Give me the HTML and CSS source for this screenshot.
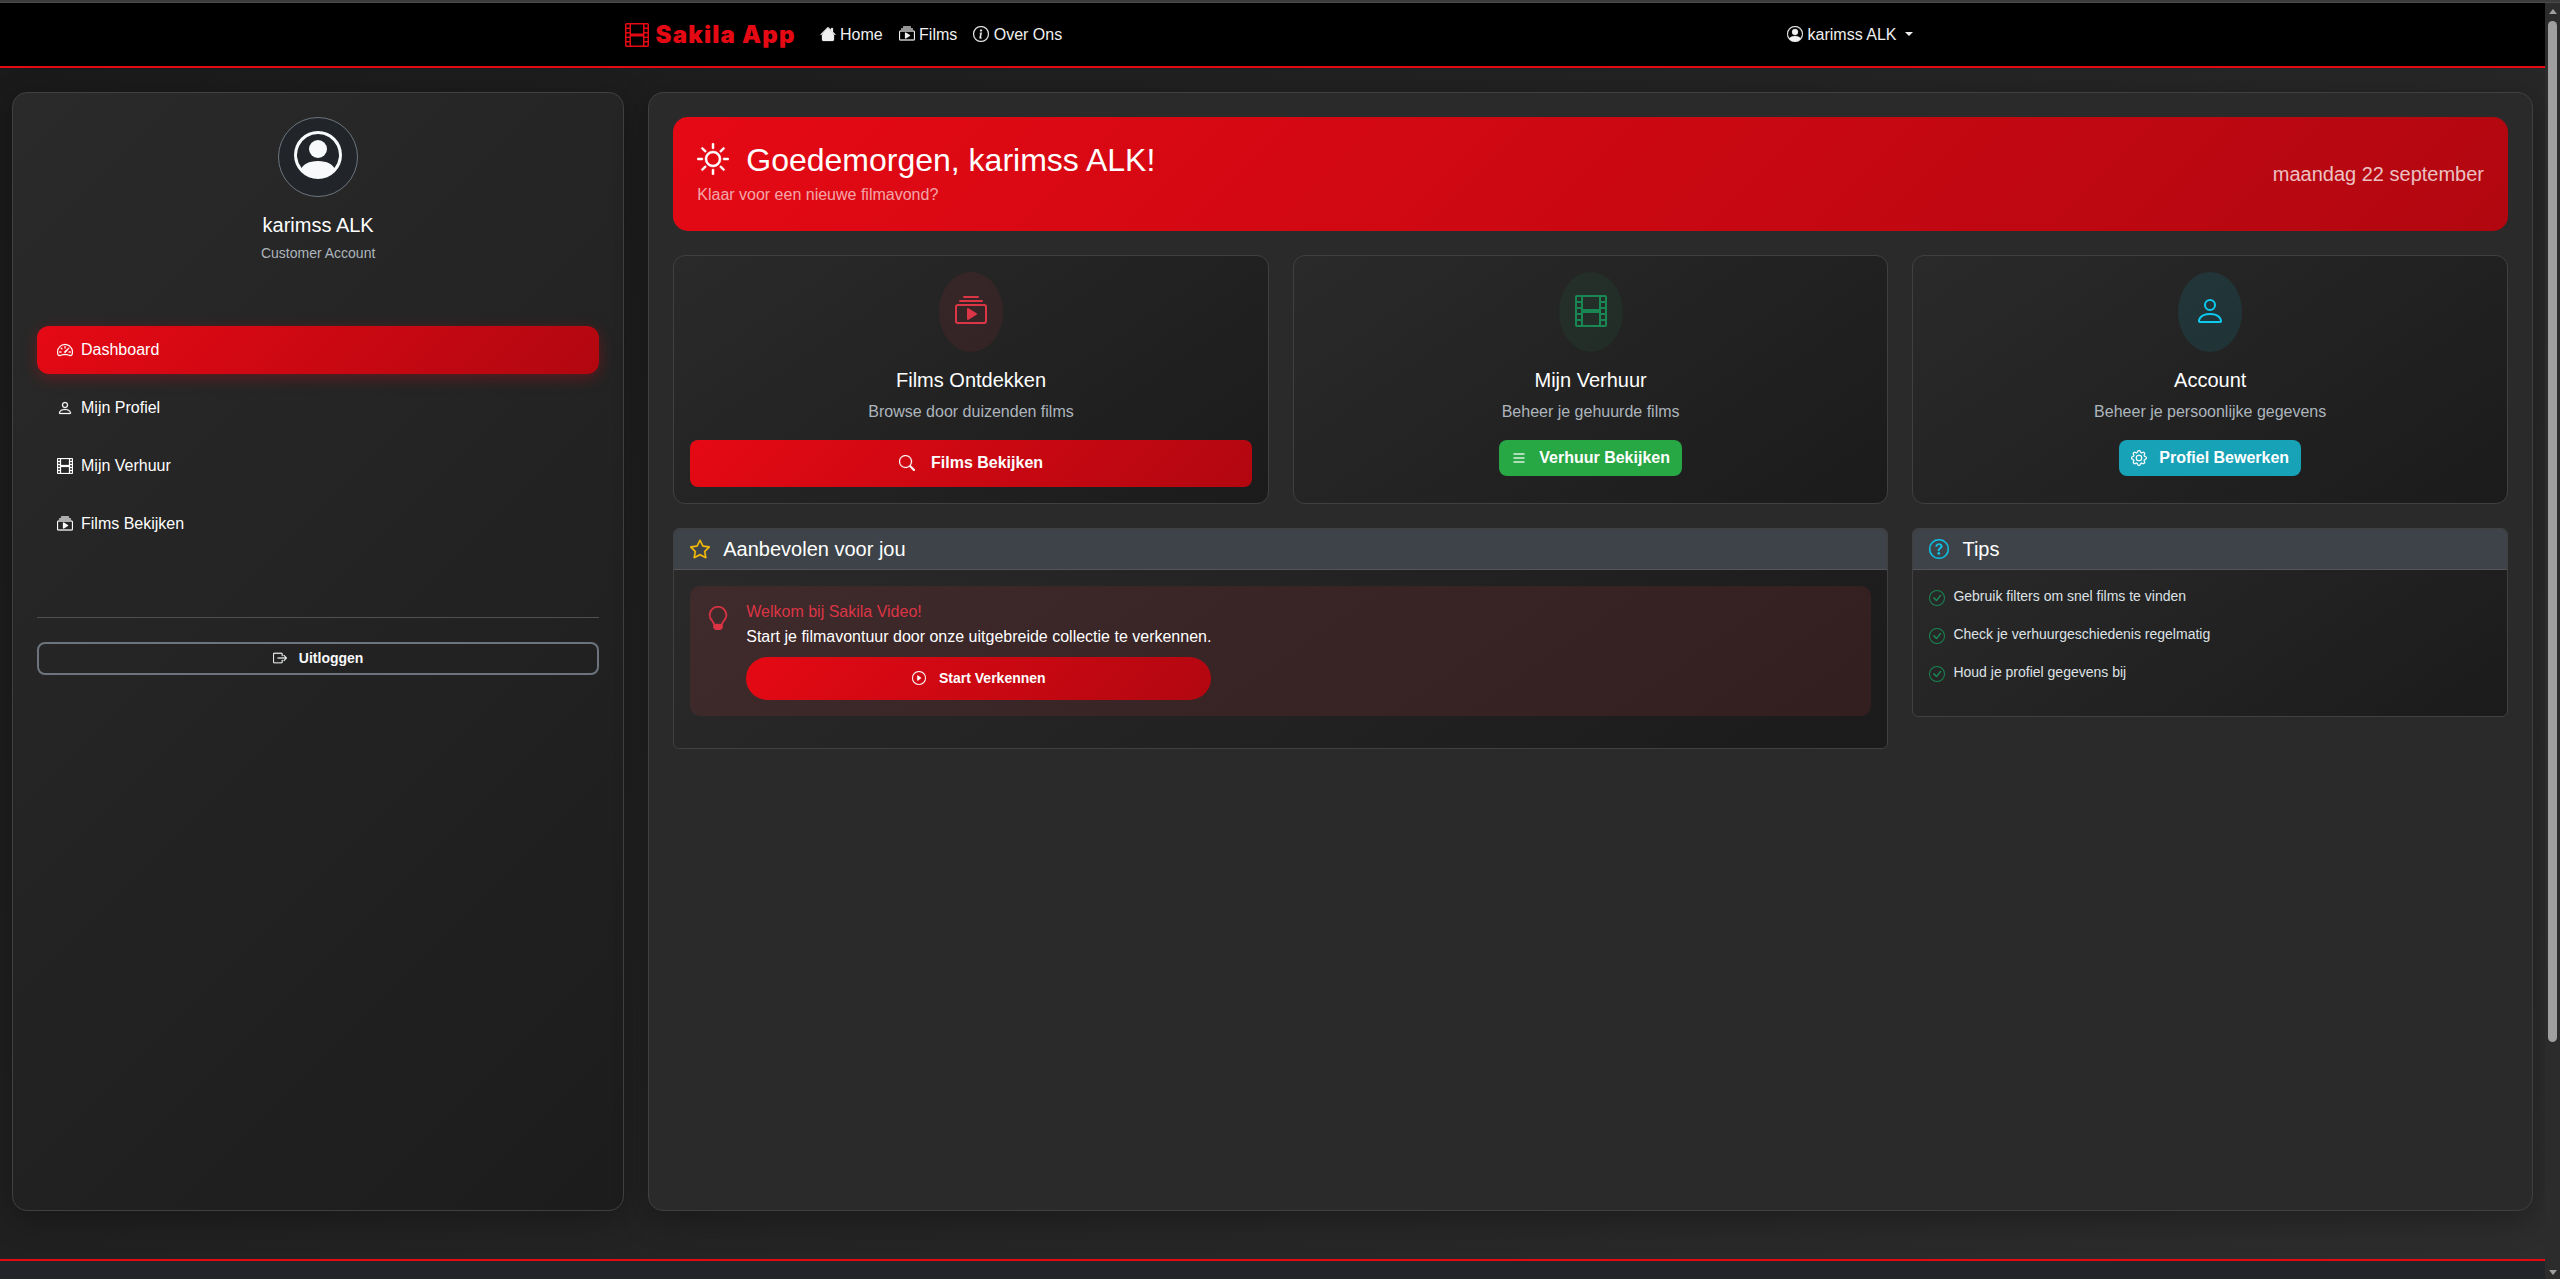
FILE: index.html
```html
<!DOCTYPE html>
<html lang="nl">
<head>
<meta charset="utf-8">
<title>Sakila App</title>
<link rel="stylesheet" href="styles.css">
</head>
<body>
<svg class="sprite" aria-hidden="true">
  <symbol id="film" viewBox="0 0 16 16"><path d="M0 1a1 1 0 0 1 1-1h14a1 1 0 0 1 1 1v14a1 1 0 0 1-1 1H1a1 1 0 0 1-1-1zm4 0v6h8V1zm8 8H4v6h8zM1 1v2h2V1zm2 3H1v2h2zM1 7v2h2V7zm2 3H1v2h2zm-2 3v2h2v-2zM15 1h-2v2h2zm-2 3v2h2V4zm2 3h-2v2h2zm-2 3v2h2v-2zm2 3h-2v2h2z"/></symbol>
  <symbol id="house" viewBox="0 0 16 16"><path d="M8.707 1.5a1 1 0 0 0-1.414 0L.646 8.146a.5.5 0 0 0 .708.708L8 2.207l6.646 6.647a.5.5 0 0 0 .708-.708L13 5.793V2.5a.5.5 0 0 0-.5-.5h-1a.5.5 0 0 0-.5.5v1.293z"/><path d="m8 3.293 6 6V13.5a1.5 1.5 0 0 1-1.5 1.5h-9A1.5 1.5 0 0 1 2 13.5V9.293z"/><path d="M8 2 1.5 8.5h13z"/></symbol>
  <symbol id="collection" viewBox="0 0 16 16"><path d="M2 3a.5.5 0 0 0 .5.5h11a.5.5 0 0 0 0-1h-11A.5.5 0 0 0 2 3m2-2a.5.5 0 0 0 .5.5h7a.5.5 0 0 0 0-1h-7A.5.5 0 0 0 4 1m2.765 5.576A.5.5 0 0 0 6 7v5a.5.5 0 0 0 .765.424l4-2.5a.5.5 0 0 0 0-.848z"/><path d="M1.5 14.5A1.5 1.5 0 0 1 0 13V6a1.5 1.5 0 0 1 1.5-1.5h13A1.5 1.5 0 0 1 16 6v7a1.5 1.5 0 0 1-1.5 1.5zm13-1a.5.5 0 0 0 .5-.5V6a.5.5 0 0 0-.5-.5h-13A.5.5 0 0 0 1 6v7a.5.5 0 0 0 .5.5z"/></symbol>
  <symbol id="info" viewBox="0 0 16 16"><path d="M8 15A7 7 0 1 1 8 1a7 7 0 0 1 0 14m0 1A8 8 0 1 0 8 0a8 8 0 0 0 0 16"/><path d="m8.93 6.588-2.29.287-.082.38.45.083c.294.07.352.176.288.469l-.738 3.468c-.194.897.105 1.319.808 1.319.545 0 1.178-.252 1.465-.598l.088-.416c-.2.176-.492.246-.686.246-.275 0-.375-.193-.304-.533zM9 4.5a1 1 0 1 1-2 0 1 1 0 0 1 2 0"/></symbol>
  <symbol id="person-circle" viewBox="0 0 16 16"><path d="M11 6a3 3 0 1 1-6 0 3 3 0 0 1 6 0"/><path fill-rule="evenodd" d="M0 8a8 8 0 1 1 16 0A8 8 0 0 1 0 8m8-7a7 7 0 0 0-5.468 11.37C3.242 11.226 4.805 10 8 10s4.757 1.225 5.468 2.37A7 7 0 0 0 8 1"/></symbol>
  <symbol id="speedometer" viewBox="0 0 16 16"><path d="M8 4a.5.5 0 0 1 .5.5V6a.5.5 0 0 1-1 0V4.5A.5.5 0 0 1 8 4M3.732 5.732a.5.5 0 0 1 .707 0l.915.914a.5.5 0 1 1-.708.708l-.914-.915a.5.5 0 0 1 0-.707M2 10a.5.5 0 0 1 .5-.5h1.586a.5.5 0 0 1 0 1H2.5A.5.5 0 0 1 2 10m9.5 0a.5.5 0 0 1 .5-.5h1.5a.5.5 0 0 1 0 1H12a.5.5 0 0 1-.5-.5m.754-4.246a.39.39 0 0 0-.527-.02L7.547 9.31a.91.91 0 1 0 1.302 1.258l3.434-4.297a.39.39 0 0 0-.029-.518z"/><path fill-rule="evenodd" d="M0 10a8 8 0 1 1 15.547 2.661c-.442 1.253-1.845 1.602-2.932 1.25C11.309 13.488 9.475 13 8 13c-1.474 0-3.31.488-4.615.911-1.087.352-2.49.003-2.932-1.25A8 8 0 0 1 0 10m8-7a7 7 0 0 0-6.603 9.329c.203.575.923.876 1.68.63C4.397 12.533 6.358 12 8 12s3.604.532 4.923.96c.757.245 1.477-.056 1.68-.631A7 7 0 0 0 8 3"/></symbol>
  <symbol id="person" viewBox="0 0 16 16"><path d="M8 8a3 3 0 1 0 0-6 3 3 0 0 0 0 6m2-3a2 2 0 1 1-4 0 2 2 0 0 1 4 0m4 8c0 1-1 1-1 1H3s-1 0-1-1 1-4 6-4 6 3 6 4m-1-.004c-.001-.246-.154-.986-.832-1.664C11.516 10.68 10.289 10 8 10s-3.516.68-4.168 1.332c-.678.678-.83 1.418-.832 1.664z"/></symbol>
  <symbol id="logout" viewBox="0 0 16 16"><path d="M10 12.5a.5.5 0 0 1-.5.5h-8a.5.5 0 0 1-.5-.5v-9a.5.5 0 0 1 .5-.5h8a.5.5 0 0 1 .5.5v2a.5.5 0 0 0 1 0v-2A1.5 1.5 0 0 0 9.5 2h-8A1.5 1.5 0 0 0 0 3.5v9A1.5 1.5 0 0 0 1.5 14h8a1.5 1.5 0 0 0 1.5-1.5v-2a.5.5 0 0 0-1 0z"/><path d="M15.854 8.354a.5.5 0 0 0 0-.708l-3-3a.5.5 0 0 0-.708.708L14.293 7.5H5.5a.5.5 0 0 0 0 1h8.793l-2.147 2.146a.5.5 0 0 0 .708.708z"/></symbol>
  <symbol id="sun" viewBox="0 0 16 16"><path d="M8 11a3 3 0 1 1 0-6 3 3 0 0 1 0 6m0 1a4 4 0 1 0 0-8 4 4 0 0 0 0 8M8 0a.5.5 0 0 1 .5.5v2a.5.5 0 0 1-1 0v-2A.5.5 0 0 1 8 0m0 13a.5.5 0 0 1 .5.5v2a.5.5 0 0 1-1 0v-2A.5.5 0 0 1 8 13m8-5a.5.5 0 0 1-.5.5h-2a.5.5 0 0 1 0-1h2a.5.5 0 0 1 .5.5M3 8a.5.5 0 0 1-.5.5h-2a.5.5 0 0 1 0-1h2A.5.5 0 0 1 3 8m10.657-5.657a.5.5 0 0 1 0 .707l-1.414 1.415a.5.5 0 1 1-.707-.708l1.414-1.414a.5.5 0 0 1 .707 0m-9.193 9.193a.5.5 0 0 1 0 .707L3.05 13.657a.5.5 0 0 1-.707-.707l1.414-1.414a.5.5 0 0 1 .707 0m9.193 2.121a.5.5 0 0 1-.707 0l-1.414-1.414a.5.5 0 0 1 .707-.707l1.414 1.414a.5.5 0 0 1 0 .707M4.464 4.465a.5.5 0 0 1-.707 0L2.343 3.05a.5.5 0 1 1 .707-.707l1.414 1.414a.5.5 0 0 1 0 .708"/></symbol>
  <symbol id="search" viewBox="0 0 16 16"><path d="M11.742 10.344a6.5 6.5 0 1 0-1.397 1.398h-.001q.044.06.098.115l3.85 3.85a1 1 0 0 0 1.415-1.414l-3.85-3.85a1 1 0 0 0-.115-.1zM12 6.5a5.5 5.5 0 1 1-11 0 5.5 5.5 0 0 1 11 0"/></symbol>
  <symbol id="list" viewBox="0 0 16 16"><path d="M2.5 12a.5.5 0 0 1 .5-.5h10a.5.5 0 0 1 0 1H3a.5.5 0 0 1-.5-.5m0-4a.5.5 0 0 1 .5-.5h10a.5.5 0 0 1 0 1H3a.5.5 0 0 1-.5-.5m0-4a.5.5 0 0 1 .5-.5h10a.5.5 0 0 1 0 1H3a.5.5 0 0 1-.5-.5"/></symbol>
  <symbol id="gear" viewBox="0 0 16 16"><path d="M8 4.754a3.246 3.246 0 1 0 0 6.492 3.246 3.246 0 0 0 0-6.492M5.754 8a2.246 2.246 0 1 1 4.492 0 2.246 2.246 0 0 1-4.492 0"/><path d="M9.796 1.343c-.527-1.79-3.065-1.79-3.592 0l-.094.319a.873.873 0 0 1-1.255.52l-.292-.16c-1.64-.892-3.433.902-2.54 2.541l.159.292a.873.873 0 0 1-.52 1.255l-.319.094c-1.79.527-1.79 3.065 0 3.592l.319.094a.873.873 0 0 1 .52 1.255l-.16.292c-.892 1.64.901 3.434 2.541 2.54l.292-.159a.873.873 0 0 1 1.255.52l.094.319c.527 1.79 3.065 1.79 3.592 0l.094-.319a.873.873 0 0 1 1.255-.52l.292.16c1.64.893 3.434-.902 2.54-2.541l-.159-.292a.873.873 0 0 1 .52-1.255l.319-.094c1.79-.527 1.79-3.065 0-3.592l-.319-.094a.873.873 0 0 1-.52-1.255l.16-.292c.893-1.64-.902-3.433-2.541-2.54l-.292.159a.873.873 0 0 1-1.255-.52zm-2.633.283c.246-.835 1.428-.835 1.674 0l.094.319a1.873 1.873 0 0 0 2.693 1.115l.291-.16c.764-.415 1.6.42 1.184 1.185l-.159.292a1.873 1.873 0 0 0 1.116 2.692l.318.094c.835.246.835 1.428 0 1.674l-.319.094a1.873 1.873 0 0 0-1.115 2.693l.16.291c.415.764-.42 1.6-1.185 1.184l-.291-.159a1.873 1.873 0 0 0-2.693 1.116l-.094.318c-.246.835-1.428.835-1.674 0l-.094-.319a1.873 1.873 0 0 0-2.692-1.115l-.292.16c-.764.415-1.6-.42-1.184-1.185l.159-.291A1.873 1.873 0 0 0 1.945 8.93l-.319-.094c-.835-.246-.835-1.428 0-1.674l.319-.094A1.873 1.873 0 0 0 3.06 4.377l-.16-.292c-.415-.764.42-1.6 1.185-1.184l.292.159a1.873 1.873 0 0 0 2.692-1.115z"/></symbol>
  <symbol id="star" viewBox="0 0 16 16"><path d="M2.866 14.85c-.078.444.36.791.746.593l4.39-2.256 4.389 2.256c.386.198.824-.149.746-.592l-.83-4.73 3.522-3.356c.33-.314.16-.888-.282-.95l-4.898-.696L8.465.792a.513.513 0 0 0-.927 0L5.354 5.12l-4.898.696c-.441.062-.612.636-.283.95l3.523 3.356-.83 4.73zm4.905-2.767-3.686 1.894.694-3.957a.56.56 0 0 0-.163-.505L1.71 6.745l4.052-.576a.53.53 0 0 0 .393-.288L8 2.223l1.847 3.658a.53.53 0 0 0 .393.288l4.052.575-2.906 2.77a.56.56 0 0 0-.163.506l.694 3.957-3.686-1.894a.5.5 0 0 0-.461 0z"/></symbol>
  <symbol id="bulb" viewBox="0 0 16 16"><path d="M2 6a6 6 0 1 1 10.174 4.31c-.203.196-.359.4-.453.619l-.762 1.769A.5.5 0 0 1 10.5 13a.5.5 0 0 1 0 1 .5.5 0 0 1 0 1l-.224.447a1 1 0 0 1-.894.553H6.618a1 1 0 0 1-.894-.553L5.5 15a.5.5 0 0 1 0-1 .5.5 0 0 1 0-1 .5.5 0 0 1-.46-.302l-.761-1.77a2 2 0 0 0-.453-.618A5.98 5.98 0 0 1 2 6m6-5a5 5 0 0 0-3.479 8.592c.263.254.514.564.676.941L5.83 12h4.342l.632-1.467c.162-.377.413-.687.676-.941A5 5 0 0 0 8 1"/><path d="M5 12.500h6v2H5z"/></symbol>
  <symbol id="play" viewBox="0 0 16 16"><path d="M8 15A7 7 0 1 1 8 1a7 7 0 0 1 0 14m0 1A8 8 0 1 0 8 0a8 8 0 0 0 0 16"/><path d="M6.271 5.055a.5.5 0 0 1 .52.038l3.5 2.5a.5.5 0 0 1 0 .814l-3.5 2.5A.5.5 0 0 1 6 10.5v-5a.5.5 0 0 1 .271-.445"/></symbol>
  <symbol id="question" viewBox="0 0 16 16"><path d="M8 15A7 7 0 1 1 8 1a7 7 0 0 1 0 14m0 1A8 8 0 1 0 8 0a8 8 0 0 0 0 16"/><path d="M5.255 5.786a.237.237 0 0 0 .241.247h.825c.138 0 .248-.113.266-.25.09-.656.54-1.134 1.342-1.134.686 0 1.314.343 1.314 1.168 0 .635-.374.927-.965 1.371-.673.489-1.206 1.06-1.168 1.987l.003.217a.25.25 0 0 0 .25.246h.811a.25.25 0 0 0 .25-.25v-.105c0-.718.273-.927 1.01-1.486.609-.463 1.244-.977 1.244-2.056 0-1.511-1.276-2.241-2.673-2.241-1.267 0-2.655.59-2.75 2.286m1.557 5.763c0 .533.425.927 1.01.927.609 0 1.028-.394 1.028-.927 0-.552-.42-.94-1.029-.94-.584 0-1.009.388-1.009.94"/></symbol>
  <symbol id="check" viewBox="0 0 16 16"><path d="M8 15A7 7 0 1 1 8 1a7 7 0 0 1 0 14m0 1A8 8 0 1 0 8 0a8 8 0 0 0 0 16"/><path d="m10.97 4.97-.02.022-3.473 4.425-2.093-2.094a.75.75 0 0 0-1.06 1.06L6.97 11.03a.75.75 0 0 0 1.079-.02l3.992-4.99a.75.75 0 0 0-1.071-1.05"/></symbol>
</svg>

<div class="window-edge"></div>
<div class="window">
  <div class="page">
    <header class="navbar">
      <div class="navbar-inner">
        <a class="brand"><svg class="icon"><use href="#film"/></svg><span>Sakila App</span></a>
        <nav class="main-nav">
          <a class="nav-item"><svg class="icon"><use href="#house"/></svg> Home</a>
          <a class="nav-item"><svg class="icon"><use href="#collection"/></svg> Films</a>
          <a class="nav-item"><svg class="icon"><use href="#info"/></svg> Over Ons</a>
        </nav>
        <a class="nav-item user-menu"><svg class="icon"><use href="#person-circle"/></svg> karimss ALK<span class="caret"></span></a>
      </div>
    </header>

    <div class="layout">
      <aside class="sidebar">
        <div class="avatar"><svg class="icon"><use href="#person-circle"/></svg></div>
        <h5 class="user-name">karimss ALK</h5>
        <small class="user-role">Customer Account</small>
        <nav class="side-nav">
          <a class="side-link active"><svg class="icon"><use href="#speedometer"/></svg>Dashboard</a>
          <a class="side-link"><svg class="icon"><use href="#person"/></svg>Mijn Profiel</a>
          <a class="side-link"><svg class="icon"><use href="#film"/></svg>Mijn Verhuur</a>
          <a class="side-link"><svg class="icon"><use href="#collection"/></svg>Films Bekijken</a>
        </nav>
        <hr class="divider">
        <button class="btn btn-logout"><svg class="icon"><use href="#logout"/></svg>Uitloggen</button>
      </aside>

      <main class="content">
        <section class="banner">
          <div>
            <h2 class="banner-title"><svg class="icon"><use href="#sun"/></svg>Goedemorgen, karimss ALK!</h2>
            <p class="banner-sub">Klaar voor een nieuwe filmavond?</p>
          </div>
          <div class="banner-date">maandag 22 september</div>
        </section>

        <section class="actions">
          <article class="card action">
            <div class="badge badge-red"><svg class="icon"><use href="#collection"/></svg></div>
            <h5 class="card-title">Films Ontdekken</h5>
            <p class="card-text">Browse door duizenden films</p>
            <button class="btn btn-red"><svg class="icon"><use href="#search"/></svg>Films Bekijken</button>
          </article>
          <article class="card action">
            <div class="badge badge-green"><svg class="icon"><use href="#film"/></svg></div>
            <h5 class="card-title">Mijn Verhuur</h5>
            <p class="card-text">Beheer je gehuurde films</p>
            <button class="btn btn-green"><svg class="icon"><use href="#list"/></svg>Verhuur Bekijken</button>
          </article>
          <article class="card action">
            <div class="badge badge-cyan"><svg class="icon"><use href="#person"/></svg></div>
            <h5 class="card-title">Account</h5>
            <p class="card-text">Beheer je persoonlijke gegevens</p>
            <button class="btn btn-cyan"><svg class="icon"><use href="#gear"/></svg>Profiel Bewerken</button>
          </article>
        </section>

        <section class="panels">
          <article class="card panel panel-wide">
            <h5 class="panel-head"><svg class="icon icon-yellow"><use href="#star"/></svg>Aanbevolen voor jou</h5>
            <div class="panel-body">
              <div class="welcome">
                <svg class="icon welcome-icon"><use href="#bulb"/></svg>
                <div class="welcome-copy">
                  <h6 class="welcome-title">Welkom bij Sakila Video!</h6>
                  <p class="welcome-text">Start je filmavontuur door onze uitgebreide collectie te verkennen.</p>
                  <button class="btn btn-red btn-pill"><svg class="icon"><use href="#play"/></svg>Start Verkennen</button>
                </div>
              </div>
            </div>
          </article>
          <article class="card panel">
            <h5 class="panel-head"><svg class="icon icon-cyan"><use href="#question"/></svg>Tips</h5>
            <ul class="panel-body tips">
              <li class="tip"><svg class="icon"><use href="#check"/></svg>Gebruik filters om snel films te vinden</li>
              <li class="tip"><svg class="icon"><use href="#check"/></svg>Check je verhuurgeschiedenis regelmatig</li>
              <li class="tip"><svg class="icon"><use href="#check"/></svg>Houd je profiel gegevens bij</li>
            </ul>
          </article>
        </section>
      </main>
    </div>

    <footer class="footer"></footer>
  </div>

  <div class="scrollbar">
    <span class="arrow arrow-up"></span>
    <span class="thumb"></span>
    <span class="arrow arrow-down"></span>
  </div>
</div>
</body>
</html>
```
FILE: styles.css
```css
* { box-sizing: border-box; }

body {
  margin: 0;
  height: 1279px;
  overflow: hidden;
  display: flex;
  flex-direction: column;
  background: #1a1a1a;
  color: #fff;
  font: 16px/24px "Liberation Sans", Arial, sans-serif;
}

h2, h5, h6, p, ul { margin: 0; padding: 0; font-weight: 400; }
h5 { font-size: 20px; line-height: 24px; }

.sprite { display: none; }
.icon {
  width: 1em;
  height: 1em;
  fill: currentColor;
  stroke: currentColor;
  stroke-width: .25px;
  overflow: visible;
  vertical-align: -.125em;
  flex: none;
}

.window-edge { height: 3px; flex: none; background: #3c3c3c; border-bottom: 1px solid #4a4a4a; }
.window { flex: 1; display: flex; min-height: 0; }
.page {
  flex: 1;
  display: flex;
  flex-direction: column;
  background: linear-gradient(135deg, #1a1a1a, #2d2d2d);
}

/* Top navigation */
.navbar { height: 65px; flex: none; background: #000; border-bottom: 2px solid #e50914; }
.navbar-inner {
  width: 1296px;
  height: 100%;
  margin: 0 auto;
  display: flex;
  align-items: center;
}
.brand {
  display: flex;
  align-items: center;
  gap: 7px;
  width: 187px;
  color: #e50914;
  font: 900 24px/36px Inter, "Liberation Sans", sans-serif;
  letter-spacing: 1.2px;
  white-space: nowrap;
}
.brand .icon, .avatar .icon, .badge .icon { stroke-width: 0; }
.main-nav { display: flex; }
.nav-item { padding: 0 8px; color: #f0f0f0; white-space: nowrap; }
.user-menu { margin-left: auto; }
.caret {
  display: inline-block;
  margin-left: 8px;
  vertical-align: 4px;
  border: 4px solid transparent;
  border-top-color: currentColor;
  border-bottom: 0;
}

/* Page columns */
.layout { flex: 1; display: flex; gap: 24px; padding: 24px 12px 48px; }
.sidebar, .content {
  border: 1px solid #404040;
  border-radius: 15px;
  padding: 24px;
  box-shadow: 0 8px 32px rgba(0, 0, 0, .3);
}
.sidebar {
  width: 612.25px;
  flex: none;
  display: flex;
  flex-direction: column;
  align-items: center;
  background: linear-gradient(135deg, #2a2a2a, #1c1c1c);
}
.content { flex: 1; background: #2a2a2a; }

/* Sidebar */
.avatar {
  width: 80px;
  height: 80px;
  padding-bottom: 4px;
  display: flex;
  align-items: center;
  justify-content: center;
  border: 1px solid #6c757d;
  border-radius: 50%;
  background: #212529;
  color: #f8f9fa;
  font-size: 48px;
}
.user-name { margin-top: 16px; }
.user-role { margin-top: 6px; font-size: 14px; line-height: 21px; color: #adb5bd; }
.side-nav { width: 100%; margin-top: 62px; display: grid; gap: 10px; }
.side-link {
  height: 48px;
  padding: 0 20px;
  display: flex;
  align-items: center;
  gap: 8px;
  border-radius: 12px;
}
.side-link.active {
  background: linear-gradient(135deg, #e50914, #b20710);
  box-shadow: 0 4px 15px rgba(229, 9, 20, .3);
}
.divider { width: 100%; height: 1px; margin: 69px 0 24px; border: 0; background: #4d5154; }

/* Buttons */
.btn {
  display: inline-flex;
  align-items: center;
  justify-content: center;
  gap: 12px;
  height: 36px;
  padding: 0 12px;
  border: 0;
  border-radius: 8px;
  color: #fff;
  font: bold 16px/24px "Liberation Sans", Arial, sans-serif;
}
.btn-logout {
  width: 100%;
  height: 33px;
  padding-bottom: 2px;
  border: 2px solid #6c757d;
  background: transparent;
  color: #f8f9fa;
  font-size: 14px;
}
.btn-red {
  width: 100%;
  height: 47px;
  padding-bottom: 1px;
  gap: 16px;
  background: linear-gradient(135deg, #e50914, #b20710);
}
.btn-green { background: #28a745; }
.btn-cyan { background: #17a2b8; }
.btn-pill { height: 43px; gap: 13px; border-radius: 22px; font-size: 14px; }

/* Greeting */
.banner {
  height: 114.4px;
  padding: 24px;
  display: flex;
  justify-content: space-between;
  align-items: center;
  border-radius: 15px;
  background: linear-gradient(135deg, #e50914, #b20710);
}
.banner-title { font-size: 32px; line-height: 38.4px; }
.banner-title .icon { margin-right: 17px; }
.banner-sub { margin-top: 4px; color: rgba(255, 255, 255, .65); }
.banner-date { font-size: 20px; color: rgba(255, 255, 255, .75); }

/* Cards */
.actions, .panels { display: grid; grid-template-columns: repeat(3, 1fr); gap: 24px; margin-top: 24px; }
.card { border: 1px solid #404040; background: linear-gradient(145deg, #2a2a2a, #1b1b1b); }
.action {
  height: 249px;
  padding: 16px;
  display: flex;
  flex-direction: column;
  align-items: center;
  border-radius: 12px;
}
.badge {
  width: 64px;
  height: 80px;
  padding-bottom: 3px;
  display: flex;
  align-items: center;
  justify-content: center;
  border-radius: 50%;
  font-size: 32px;
}
.badge-red { color: #dc3545; background: rgba(220, 53, 69, .1); }
.badge-green { color: #198754; background: rgba(25, 135, 84, .1); }
.badge-cyan { color: #0dcaf0; background: rgba(13, 202, 240, .1); }
.card-title { margin-top: 16px; }
.card-text { margin: 8px 0 16px; color: #adb5bd; }

/* Panels */
.panels { align-items: start; }
.panel { border-radius: 6px; overflow: hidden; }
.panel-wide { grid-column: span 2; }
.panel-head { padding: 8px 16px; background: #3d4348; border-bottom: 1px solid #555; }
.panel-head .icon { margin-right: 13px; }
.icon-yellow { color: #ffc107; }
.icon-cyan { color: #0dcaf0; }
.panel-body { padding: 16px; }

.welcome {
  height: 130px;
  margin-bottom: 16px;
  padding: 16px;
  display: flex;
  gap: 16px;
  border-radius: 10px;
  background: rgba(220, 53, 69, .12);
}
.welcome-icon { margin-top: 4px; font-size: 24px; color: #dc3545; }
.welcome-title { font-size: 16px; line-height: 19.2px; color: #dc3545; }
.welcome-text { margin: 3px 0 8px; }

.tips { list-style: none; }
.tip {
  height: 22px;
  margin-bottom: 16px;
  display: flex;
  gap: 8px;
  font-size: 14px;
  line-height: 21px;
  color: #dee2e6;
}
.tip .icon { margin-top: 4px; font-size: 16px; color: #198754; stroke-width: 0; }

.footer { height: 20px; flex: none; background: #212529; border-top: 2px solid #e50914; }

/* Scrollbar */
.scrollbar {
  width: 15px;
  flex: none;
  padding: 6px 0 4px;
  display: flex;
  flex-direction: column;
  align-items: center;
  background: #2c2c2c;
}
.arrow { border: 4px solid transparent; }
.arrow-up { border-top: 0; border-bottom: 5px solid #9f9f9f; }
.arrow-down { margin-top: auto; border-bottom: 0; border-top: 5px solid #9f9f9f; }
.thumb { width: 9px; height: 1021px; margin-top: 7px; border-radius: 5px; background: #9f9f9f; }
```
